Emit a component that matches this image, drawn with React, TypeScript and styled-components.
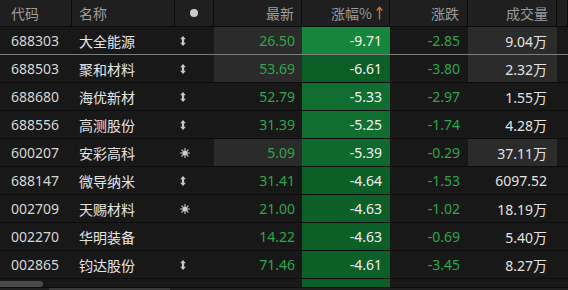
import React from "react";
import styled, { createGlobalStyle } from "styled-components";

const GlobalStyle = createGlobalStyle`
  html, body { margin: 0; padding: 0; background: #181818; }
  body { font-family: "Noto Sans", "Noto Sans CJK SC", sans-serif; }
`;

const COLS = "72px 103px 39px 88px 88px 78px 89px 11px";

const Page = styled.div`
  position: relative;
  width: 568px;
  height: 290px;
  overflow: hidden;
  background: #181818;
`;

const HeaderRow = styled.div`
  display: grid;
  grid-template-columns: ${COLS};
  height: 27px;
  box-sizing: border-box;
  background: #1f1f1f;
  border-bottom: 1px solid #0c0c0c;
`;

const HeadCell = styled.div<{ $align?: "left" | "right" | "center"; $pl?: number; $pr?: number }>`
  display: flex;
  align-items: center;
  justify-content: ${(p) => (p.$align === "right" ? "flex-end" : p.$align === "center" ? "center" : "flex-start")};
  padding-left: ${(p) => p.$pl ?? 0}px;
  padding-right: ${(p) => p.$pr ?? 0}px;
  box-sizing: border-box;
  border-right: 1px solid #0c0c0c;
  color: #9c9c9c;
  font-size: 14px;
  font-family: "Noto Sans CJK SC", sans-serif;
  white-space: nowrap;
`;

const SortArrow = styled.svg`
  margin-left: 4px;
  flex: none;
`;

const Dot = styled.span`
  width: 8px;
  height: 8px;
  border-radius: 50%;
  background: #c9c9c9;
`;

const Row = styled.div<{ $selected?: boolean }>`
  display: grid;
  grid-template-columns: ${COLS};
  height: 28px;
  box-sizing: border-box;
  border-bottom: 1px solid ${(p) => (p.$selected ? "#7c7c7c" : "#0c0c0c")};
`;

const Cell = styled.div<{
  $align?: "left" | "right";
  $pl?: number;
  $pr?: number;
  $bg?: string;
  $color?: string;
}>`
  display: flex;
  align-items: center;
  justify-content: ${(p) => (p.$align === "right" ? "flex-end" : "flex-start")};
  padding-left: ${(p) => p.$pl ?? 0}px;
  padding-right: ${(p) => p.$pr ?? 0}px;
  box-sizing: border-box;
  background: ${(p) => p.$bg ?? "transparent"};
  color: ${(p) => p.$color ?? "#dadada"};
  font-size: 14px;
  white-space: nowrap;
  font-family: "Noto Sans", "Noto Sans CJK SC", sans-serif;
`;

const NameCell = styled(Cell)`
  font-family: "Noto Sans CJK SC", sans-serif;
  color: #e4e4e4;
`;

const Scrollbar = styled.div`
  position: absolute;
  left: 0;
  top: 281px;
  width: 43px;
  height: 6px;
  background: #4a4a4a;
  border-radius: 0 3px 3px 0;
`;

const BottomTrack = styled.div`
  position: absolute;
  left: 0;
  right: 0;
  top: 287px;
  height: 3px;
  background: #202020;
  border-top: 1px solid #0c0c0c;
  box-sizing: border-box;
`;

const BottomThumb = styled.div`
  position: absolute;
  left: 49px;
  top: 0;
  width: 121px;
  height: 2px;
  background: #3a3a3a;
`;

const UpDown = () => (
  <svg width="6" height="10" viewBox="0 0 6 10">
    <polygon points="3,0 5.8,3.2 4.1,3.2 4.1,6.8 5.8,6.8 3,10 0.2,6.8 1.9,6.8 1.9,3.2 0.2,3.2" fill="#c8c8c8" />
  </svg>
);

const Sun = () => (
  <svg width="10" height="10" viewBox="0 0 10 10">
    <circle cx="5" cy="5" r="2.6" fill="#d0d0d0" />
    <g stroke="#d0d0d0" strokeWidth="1.1" strokeLinecap="round">
      <line x1="5" y1="0.6" x2="5" y2="2" />
      <line x1="5" y1="8" x2="5" y2="9.4" />
      <line x1="0.6" y1="5" x2="2" y2="5" />
      <line x1="8" y1="5" x2="9.4" y2="5" />
      <line x1="1.9" y1="1.9" x2="2.8" y2="2.8" />
      <line x1="7.2" y1="7.2" x2="8.1" y2="8.1" />
      <line x1="8.1" y1="1.9" x2="7.2" y2="2.8" />
      <line x1="1.9" y1="8.1" x2="2.8" y2="7.2" />
    </g>
  </svg>
);

type Stock = {
  code: string;
  name: string;
  icon: "ud" | "sun" | "";
  price: string;
  pct: string;
  chg: string;
  vol: string;
  hl: boolean;
  green: string;
};

const rows: Stock[] = [
  { code: "688303", name: "大全能源", icon: "ud", price: "26.50", pct: "-9.71", chg: "-2.85", vol: "9.04万", hl: true, green: "#15863b" },
  { code: "688503", name: "聚和材料", icon: "ud", price: "53.69", pct: "-6.61", chg: "-3.80", vol: "2.32万", hl: true, green: "#0c5e27" },
  { code: "688680", name: "海优新材", icon: "ud", price: "52.79", pct: "-5.33", chg: "-2.97", vol: "1.55万", hl: false, green: "#106e30" },
  { code: "688556", name: "高测股份", icon: "ud", price: "31.39", pct: "-5.25", chg: "-1.74", vol: "4.28万", hl: false, green: "#106e30" },
  { code: "600207", name: "安彩高科", icon: "sun", price: "5.09", pct: "-5.39", chg: "-0.29", vol: "37.11万", hl: true, green: "#0f692e" },
  { code: "688147", name: "微导纳米", icon: "ud", price: "31.41", pct: "-4.64", chg: "-1.53", vol: "6097.52", hl: false, green: "#0c5f27" },
  { code: "002709", name: "天赐材料", icon: "sun", price: "21.00", pct: "-4.63", chg: "-1.02", vol: "18.19万", hl: false, green: "#0c5f27" },
  { code: "002270", name: "华明装备", icon: "", price: "14.22", pct: "-4.63", chg: "-0.69", vol: "5.40万", hl: false, green: "#0c5f27" },
  { code: "002865", name: "钧达股份", icon: "ud", price: "71.46", pct: "-4.61", chg: "-3.45", vol: "8.27万", hl: false, green: "#0c5f27" },
];

const GREEN_TEXT = "#2aa84b";
const HL = "#2b2b2b";

export default function App() {
  return (
    <Page>
      <GlobalStyle />
      <HeaderRow>
        <HeadCell $pl={11}>代码</HeadCell>
        <HeadCell $pl={7}>名称</HeadCell>
        <HeadCell $align="center">
          <Dot />
        </HeadCell>
        <HeadCell $align="right" $pr={7}>最新</HeadCell>
        <HeadCell $align="right" $pr={6}>
          涨幅%
          <SortArrow width="7" height="14" viewBox="0 0 7 14">
            <path d="M3.5 1.5 V13.5 M0.8 4.5 L3.5 1.3 L6.2 4.5" stroke="#e2702c" strokeWidth="1.3" fill="none" />
          </SortArrow>
        </HeadCell>
        <HeadCell $align="right" $pr={8}>涨跌</HeadCell>
        <HeadCell $align="right" $pr={8}>成交量</HeadCell>
        <HeadCell />
      </HeaderRow>
      {rows.map((r, i) => (
        <Row key={r.code} $selected={i === 0}>
          <Cell $pl={11} $color="#d6d6d6">{r.code}</Cell>
          <NameCell $pl={7}>{r.name}</NameCell>
          <Cell $pl={5}>{r.icon === "ud" ? <UpDown /> : r.icon === "sun" ? <Sun /> : null}</Cell>
          <Cell $align="right" $pr={7} $bg={r.hl ? HL : undefined} $color={GREEN_TEXT}>{r.price}</Cell>
          <Cell $align="right" $pr={8} $bg={r.green} $color="#f2f2f2">{r.pct}</Cell>
          <Cell $align="right" $pr={8} $color={GREEN_TEXT}>{r.chg}</Cell>
          <Cell $align="right" $pr={10} $bg={r.hl ? HL : undefined} $color="#e2e2e2">{r.vol}</Cell>
          <Cell />
        </Row>
      ))}
      <Row>
        <Cell />
        <Cell />
        <Cell />
        <Cell />
        <Cell $bg="#0c5f27" />
        <Cell />
        <Cell />
        <Cell />
      </Row>
      <Scrollbar />
      <BottomTrack>
        <BottomThumb />
      </BottomTrack>
    </Page>
  );
}
